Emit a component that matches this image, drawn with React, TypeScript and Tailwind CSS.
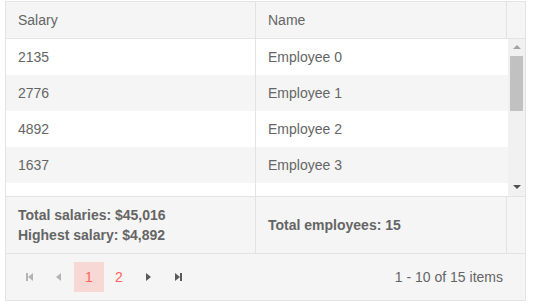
import React from 'react'

// the fifth row sits mostly below the fold, only its top strip shows
const rows = [
  { salary: '2135', name: 'Employee 0' },
  { salary: '2776', name: 'Employee 1' },
  { salary: '4892', name: 'Employee 2' },
  { salary: '1637', name: 'Employee 3' },
  { salary: '', name: '' },
]

const Tri = ({ dir, color }: { dir: 'left' | 'right' | 'up' | 'down'; color: string }) => {
  const pts = {
    left: '6,0 6,8 1,4',
    right: '1,0 1,8 6,4',
    up: '0,5 8,5 4,1',
    down: '0,1 8,1 4,5',
  }[dir]
  return (
    <svg width="8" height="8" viewBox="0 0 8 8">
      <polygon points={pts} fill={color} />
    </svg>
  )
}

const SeekIcon = ({ end, color }: { end?: boolean; color: string }) => (
  <svg width="8" height="8" viewBox="0 0 8 8">
    {end ? (
      <>
        <polygon points="0,0 0,8 5,4" fill={color} />
        <rect x="5" y="0" width="2" height="8" fill={color} />
      </>
    ) : (
      <>
        <rect x="1" y="0" width="2" height="8" fill={color} />
        <polygon points="8,0 8,8 3,4" fill={color} />
      </>
    )}
  </svg>
)

export default function App() {
  return (
    <div className="pt-px pl-[5px] font-['Liberation_Sans',Arial,sans-serif] text-[14px] text-[#656565]">
      <div className="w-[521px] border border-[#e3e3e3] bg-white">
        {/* header */}
        <div className="flex h-[37px] border-b border-[#e3e3e3] bg-[#f5f5f5]">
          <div className="flex w-[250px] items-center border-r border-[#e3e3e3] px-3">Salary</div>
          <div className="flex w-[250px] items-center px-3">Name</div>
          <div className="w-[18px] border-l border-[#e3e3e3]" />
        </div>

        {/* body */}
        <div className="flex h-[157px]">
          <div className="h-full w-[502px] overflow-hidden">
            {rows.map((r, i) => (
              <div key={i} className={`flex h-[36px] ${i % 2 === 1 ? 'bg-[#f5f5f5]' : 'bg-white'}`}>
                <div className="flex w-[250px] items-center border-r border-[#e3e3e3] px-3">{r.salary}</div>
                <div className="flex flex-1 items-center px-3">{r.name}</div>
              </div>
            ))}
          </div>
          <div className="flex w-[17px] flex-col bg-[#f1f1f1]">
            <div className="flex h-[17px] items-center justify-center">
              <Tri dir="up" color="#a3a3a3" />
            </div>
            <div className="mx-auto h-[55px] w-[13px] bg-[#c1c1c1]" />
            <div className="flex-1" />
            <div className="flex h-[17px] items-center justify-center">
              <Tri dir="down" color="#505050" />
            </div>
          </div>
        </div>

        {/* footer */}
        <div className="flex h-[57px] border-t border-[#e3e3e3] bg-[#f5f5f5] font-bold">
          <div className="flex w-[250px] flex-col justify-center border-r border-[#e3e3e3] px-3 leading-[20px]">
            <div>Total salaries: $45,016</div>
            <div>Highest salary: $4,892</div>
          </div>
          <div className="flex w-[250px] items-center px-3">Total employees: 15</div>
          <div className="w-[18px] border-l border-[#e3e3e3]" />
        </div>

        {/* pager */}
        <div className="flex h-[47px] items-center border-t border-[#e3e3e3] bg-[#f5f5f5] pl-2 pr-[22px]">
          <div className="flex items-center">
            <div className="flex h-[30px] w-[30px] items-center justify-center">
              <SeekIcon color="#b4b4b4" />
            </div>
            <div className="flex h-[30px] w-[30px] items-center justify-center">
              <Tri dir="left" color="#b4b4b4" />
            </div>
            <div className="flex h-[30px] w-[30px] items-center justify-center bg-[#f8d8d5] text-[#ff6358]">1</div>
            <div className="flex h-[30px] w-[30px] items-center justify-center text-[#ff6358]">2</div>
            <div className="flex h-[30px] w-[30px] items-center justify-center">
              <Tri dir="right" color="#5a5a5a" />
            </div>
            <div className="flex h-[30px] w-[30px] items-center justify-center">
              <SeekIcon end color="#5a5a5a" />
            </div>
          </div>
          <div className="ml-auto">1 - 10 of 15 items</div>
        </div>
      </div>
    </div>
  )
}
